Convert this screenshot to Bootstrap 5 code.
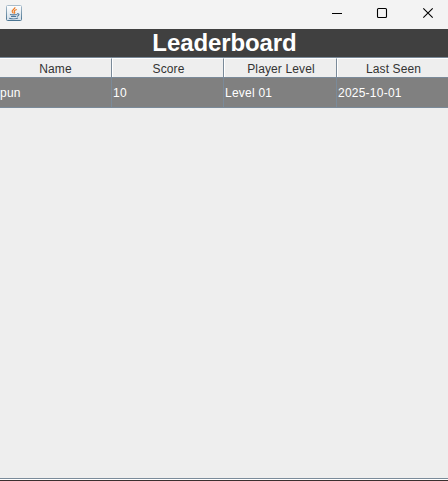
<!DOCTYPE html>
<html lang="en">
<head>
<meta charset="utf-8">
<meta name="viewport" content="width=device-width, initial-scale=1">
<title>Leaderboard</title>
<link href="https://cdn.jsdelivr.net/npm/bootstrap@5.3.0/dist/css/bootstrap.min.css" rel="stylesheet">
<style>
body{font-family:"Liberation Sans",Arial,sans-serif;font-size:12px;line-height:16px;background:#eee;color:#333;border-bottom:1px solid #3a2f2f}
.titlebar{height:29px;background:#f3f3f3;padding:0 0 3px 6px}
.winbtn{width:45px;height:26px;padding:0;line-height:0}
.winbtn:last-child{width:44px;padding-left:4px}
.heading{height:28px;background:#404040;color:#fff;font-size:24px;line-height:28px;letter-spacing:-.1px;padding-left:1px}
.board{display:grid;grid-template-columns:112px 112px 113px 111px;border-top:1px solid #7a8a99}
.hcell{height:20px;border-top:1px solid #fff;border-bottom:1px solid #7a8a99;border-right:1px solid #7a8a99;line-height:20px;text-align:center;letter-spacing:.12px}
.hcell + .hcell{background:linear-gradient(#fff,#fff) 0 0/1px 100% no-repeat border-box;padding-left:2px}
.hcell.final{border-right:0}
.dcell{height:30px;background:#808080;color:#fff;border-right:1px solid #7a8a99;border-bottom:1px solid #7a8a99;line-height:31px;padding-left:1px;letter-spacing:.23px}
.dcell.final{border-right:0}
.baseline{border-bottom:1px solid #fff;box-shadow:inset 0 -1px #7a8a99}
</style>
</head>
<body class="vh-100 d-flex flex-column overflow-hidden">
<header class="titlebar d-flex align-items-center justify-content-between flex-shrink-0">
<svg width="16" height="16" viewBox="0 0 16 16" aria-label="Java">
<defs><linearGradient id="g" x2="0" y2="1"><stop stop-color="#fff"/><stop offset="1" stop-color="#d3dfe9"/></linearGradient><linearGradient id="edge" x2="0" y2="1"><stop stop-color="#a9bccb"/><stop offset="1" stop-color="#4b7592"/></linearGradient></defs>
<rect x=".5" y=".5" width="15" height="15" rx="1" fill="url(#g)" stroke="url(#edge)"/>
<path d="M9 2.3C9.2 4.3 5 5.2 6.3 7L7.5 8.4M10.8 4.5C8 5.4 7.8 6.2 8.6 7.1 9 7.7 8.7 8.1 8.3 8.6" fill="none" stroke="#ee7a22" stroke-width="1.2"/>
<path d="M4 9.5C5 10 9.5 10 10.8 9.5M5 11.5H10M11 8.9C14 8.3 13.3 11 10.8 11.4M3.2 13.2C5.5 14 10 14 12 13" fill="none" stroke="#4d7599" stroke-width="1.1"/>
</svg>
<div class="d-flex">
<button class="btn border-0 rounded-0 winbtn" aria-label="Minimize"><svg width="12" height="12" viewBox="0 0 12 12"><path d="M1 6.5h10" stroke="#000"/></svg></button>
<button class="btn border-0 rounded-0 winbtn" aria-label="Maximize"><svg width="12" height="12" viewBox="0 0 12 12"><rect x="1.5" y="1.5" width="9" height="9" rx="1" fill="none" stroke="#000" stroke-width="1.1"/></svg></button>
<button class="btn border-0 rounded-0 winbtn" aria-label="Close"><svg width="12" height="12" viewBox="0 0 12 12"><path d="M1.3 1.3l9.4 9.4M10.7 1.3L1.3 10.7" stroke="#000" stroke-width="1.1"/></svg></button>
</div>
</header>
<h1 class="heading fw-bold text-center m-0 flex-shrink-0">Leaderboard</h1>
<main class="board flex-shrink-0">
<div class="hcell">Name</div><div class="hcell">Score</div><div class="hcell">Player Level</div><div class="hcell final">Last Seen</div>
<div class="dcell ps-0">pun</div><div class="dcell">10</div><div class="dcell">Level 01</div><div class="dcell final">2025-10-01</div>
</main>
<div class="baseline flex-grow-1"></div>
<script src="https://cdn.jsdelivr.net/npm/bootstrap@5.3.0/dist/js/bootstrap.bundle.min.js"></script>
</body>
</html>
